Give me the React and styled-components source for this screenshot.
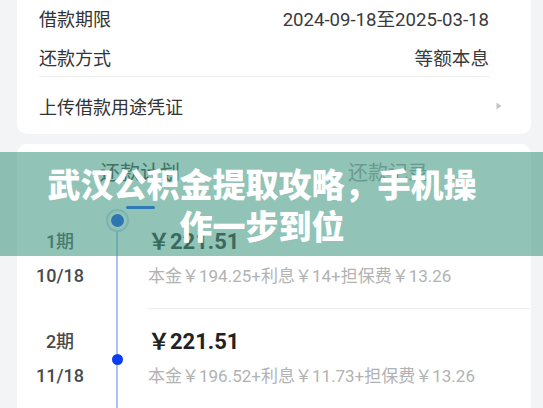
import React from "react";
import styled, { createGlobalStyle } from "styled-components";

const GlobalStyle = createGlobalStyle`
  html, body {
    margin: 0;
    padding: 0;
    background: #f3f4f6;
  }
  body {
    font-family: Roboto, "Noto Sans CJK SC", sans-serif;
  }
`;

const loanInfo = [
  { label: "借款期限", value: "2024-09-18至2025-03-18" },
  { label: "还款方式", value: "等额本息" }
];

const plan = [
  {
    period: "1期",
    date: "10/18",
    amount: "￥221.51",
    detail: "本金￥194.25+利息￥14+担保费￥13.26",
    current: true
  },
  {
    period: "2期",
    date: "11/18",
    amount: "￥221.51",
    detail: "本金￥196.52+利息￥11.73+担保费￥13.26"
  }
];

export default function App() {
  return (
    <Page>
      <GlobalStyle />
      <InfoCard>
        {loanInfo.map(({ label, value }) => (
          <InfoRow key={label}>
            <Label>{label}</Label>
            <Value>{value}</Value>
          </InfoRow>
        ))}
        <Divider />
        <InfoRow tall arrow>
          <Label>上传借款用途凭证</Label>
          <Arrow width="6" height="8" viewBox="0 0 6 8">
            <path d="M0.5 0.5 L5.5 4 L0.5 7.5 Z" fill="#c4c4c4" />
          </Arrow>
        </InfoRow>
      </InfoCard>

      <PlanCard>
        <Tabs>
          <Tab active>
            <TabText active>还款计划</TabText>
            <TabBar active />
          </Tab>
          <Tab>
            <TabText>还款记录</TabText>
            <TabBar />
          </Tab>
        </Tabs>

        {plan.map((item, index) => (
          <PlanRow key={item.period}>
            <DateCol>
              <Period>{item.period}</Period>
              <Period>{item.date}</Period>
            </DateCol>
            <Rail>
              <RailLine hidden={index === 0} />
              {item.current ? (
                <Ring>
                  <Dot />
                </Ring>
              ) : (
                <Dot small />
              )}
              <RailLine />
            </Rail>
            <PlanBody>
              <Amount>{item.amount}</Amount>
              <Detail>{item.detail}</Detail>
            </PlanBody>
          </PlanRow>
        ))}
      </PlanCard>

      {/* title banner lying over the screenshot */}
      <Banner>
        <BannerTitle>武汉公积金提取攻略，手机操作一步到位</BannerTitle>
      </Banner>
    </Page>
  );
}

const Page = styled.div`
  position: relative;
  width: 543px;
  height: 408px;
  overflow: hidden;
  background: #f3f4f6;
`;

const InfoCard = styled.div`
  margin: -12px 12px 0 17px;
  padding-top: 10px;
  background: #fff;
  border-radius: 10px;
`;

const InfoRow = styled.div`
  display: flex;
  align-items: center;
  justify-content: space-between;
  height: ${p => (p.tall ? "57px" : "39px")};
  padding: 0 ${p => (p.arrow ? "29px" : "42px")} 0 22px;
`;

const Label = styled.span`
  font-size: 18px;
  color: #333;
`;

const Value = styled.span`
  font-size: 18.6px;
  color: #3a3a3a;
`;

const Divider = styled.div`
  height: 1px;
  margin: 0 41px 0 22px;
  background: #eceded;
`;

const Arrow = styled.svg`
  display: block;
`;

const PlanCard = styled.div`
  margin: 10px 12px 0 17px;
  background: #fff;
  border-radius: 10px 10px 0 0;
`;

const Tabs = styled.div`
  display: grid;
  grid-template-columns: 1fr 1fr;
  margin: 0 19px 0 -1px;
`;

const Tab = styled.div`
  display: flex;
  flex-direction: column;
  align-items: center;
  padding-top: 16px;
`;

const TabText = styled.span`
  font-size: 20px;
  line-height: 26px;
  color: ${p => (p.active ? "#333" : "#999")};
`;

const TabBar = styled.div`
  width: 29px;
  height: 3px;
  margin-top: 20px;
  border-radius: 2px;
  background: ${p => (p.active ? "#0a4cff" : "transparent")};
`;

const PlanRow = styled.div`
  display: grid;
  grid-template-columns: 86px 28px 1fr;
  height: 100px;
`;

const DateCol = styled.div`
  display: flex;
  flex-direction: column;
  align-items: center;
  justify-content: center;
  gap: 10px;
`;

const Period = styled.span`
  font-size: 18px;
  line-height: 24px;
  font-weight: 500;
  color: #4a4a4a;
`;

const Rail = styled.div`
  display: flex;
  flex-direction: column;
  align-items: center;
`;

const RailLine = styled.div`
  flex: 1;
  width: 2px;
  background: ${p => (p.hidden ? "transparent" : "#adc3f2")};
`;

const Ring = styled.div`
  display: flex;
  align-items: center;
  justify-content: center;
  width: 19px;
  height: 19px;
  border: 2px solid #c9d7f6;
  border-radius: 50%;
  background: #fff;
`;

const Dot = styled.div`
  width: ${p => (p.small ? "11px" : "13px")};
  height: ${p => (p.small ? "11px" : "13px")};
  border-radius: 50%;
  background: #0a3df5;
`;

const PlanBody = styled.div`
  display: flex;
  flex-direction: column;
  justify-content: center;
  gap: 10px;
  margin-left: 17px;
  border-bottom: 1px solid #eeeff0;
`;

const Amount = styled.span`
  font-size: 22px;
  line-height: 24px;
  font-weight: 700;
  color: #222;
`;

const Detail = styled.span`
  font-size: 17px;
  line-height: 24px;
  color: #b2b2b2;
`;

const Banner = styled.div`
  position: absolute;
  top: 152px;
  left: 0;
  right: 0;
  height: 104px;
  display: flex;
  align-items: center;
  background: rgba(72, 155, 133, 0.6);
`;

const BannerTitle = styled.h1`
  width: 440px;
  margin: 0 0 0 42px;
  font-family: "Noto Sans CJK SC", sans-serif;
  font-size: 33px;
  line-height: 42px;
  font-weight: 900;
  text-align: center;
  color: #fff;
`;
